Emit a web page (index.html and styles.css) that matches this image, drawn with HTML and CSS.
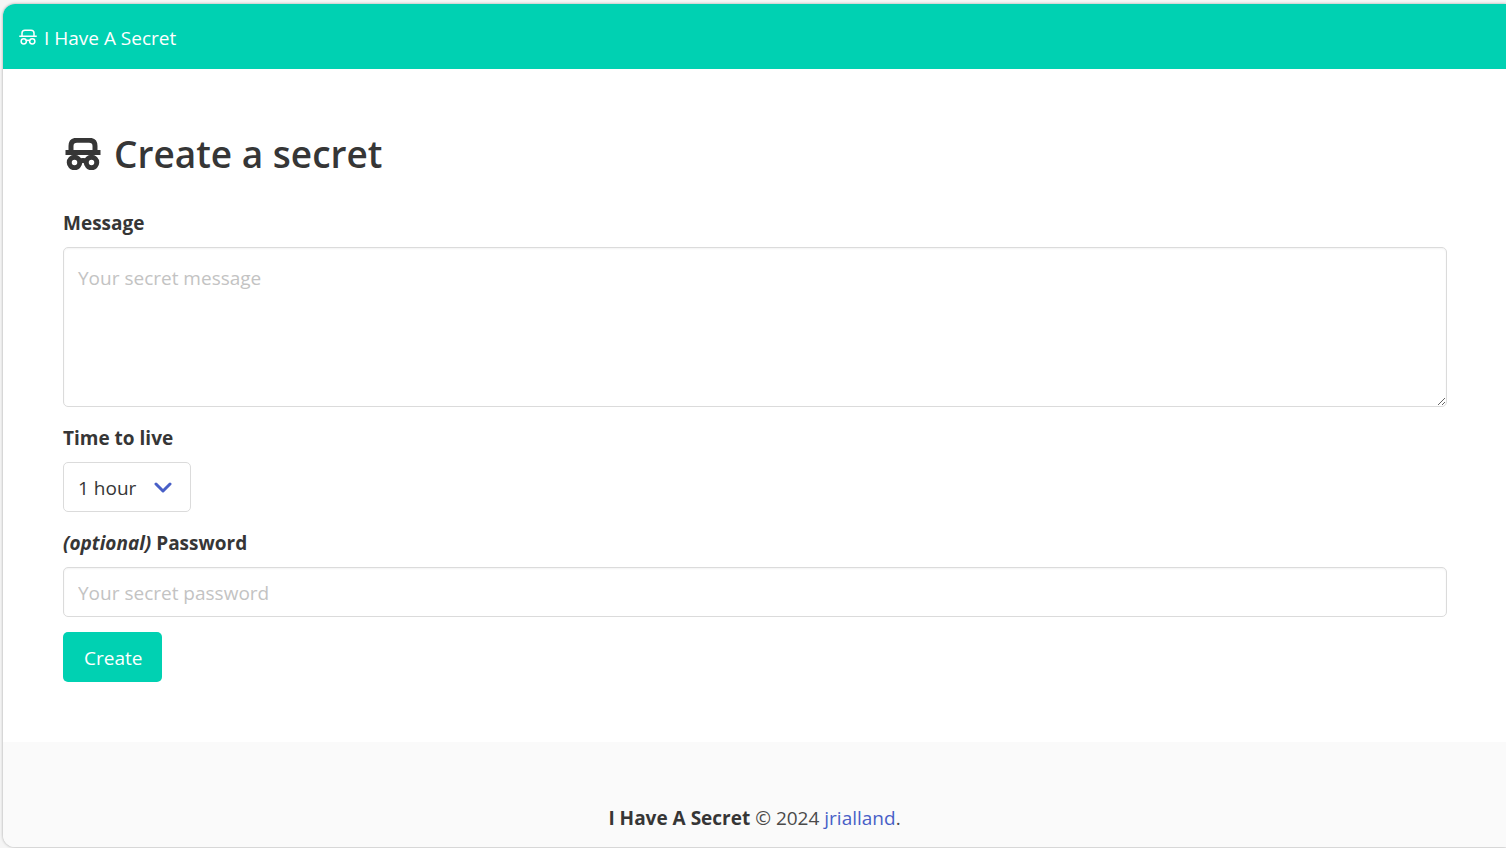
FILE: index.html
```html
<!DOCTYPE html>
<html lang="en">
<head>
  <meta charset="utf-8">
  <meta name="viewport" content="width=device-width, initial-scale=1">
  <title>I Have A Secret</title>
  <link rel="stylesheet" href="styles.css">
</head>
<body>
  <svg class="sprite" aria-hidden="true">
    <symbol id="incognito" viewBox="0 0 35 32">
      <path d="M5.500 14V8Q5.500 2.250 11.500 2.250h12Q29.500 2.250 29.500 8V14"/>
      <path d="M0 14.500h35"/>
      <circle cx="9" cy="24.500" r="5.250"/>
      <circle cx="26" cy="24.500" r="5.250"/>
      <path d="M13 23.500q4.500-2 9 0"/>
    </symbol>
  </svg>
  <div class="page">
    <nav class="navbar">
      <a class="brand" href="#"><svg class="icon brand-icon" aria-hidden="true"><use href="#incognito"/></svg>I Have A Secret</a>
    </nav>
    <main class="section">
      <h1 class="title"><svg class="icon title-icon" aria-hidden="true"><use href="#incognito"/></svg>Create a secret</h1>
      <form class="form">
        <div class="field">
          <label class="label" for="message">Message</label>
          <textarea class="control textarea" id="message" placeholder="Your secret message"></textarea>
        </div>
        <div class="field">
          <label class="label" for="ttl">Time to live</label>
          <div class="select">
            <select class="control" id="ttl"><option>1 hour</option></select>
            <svg class="arrow" viewBox="0 0 18 11" aria-hidden="true"><path d="M2 2l7 7 7-7" fill="none" stroke="currentColor" stroke-width="3" stroke-linecap="round" stroke-linejoin="round"/></svg>
          </div>
        </div>
        <div class="field">
          <label class="label" for="password"><em>(optional)</em> Password</label>
          <input class="control input" id="password" type="password" placeholder="Your secret password">
        </div>
        <button class="button" type="button">Create</button>
      </form>
    </main>
    <footer class="footer">
      <p><strong>I Have A Secret</strong> © 2024 <a href="#">jrialland</a>.</p>
    </footer>
  </div>
</body>
</html>
```
FILE: styles.css
```css
* {
  box-sizing: border-box;
}

body {
  margin: 0;
  padding: 4px 0 1px 3px;
  min-height: 100vh;
  display: flex;
  background: #f5f5f5;
  color: #4a4a4a;
  font: 19px/30px "Open Sans", "Noto Sans", sans-serif;
}

.sprite {
  position: absolute;
  width: 0;
  height: 0;
}

.icon {
  fill: none;
  stroke: currentColor;
}

.page {
  flex: 1;
  display: flex;
  flex-direction: column;
  overflow: hidden;
  background: #fff;
  border-radius: 12px 0 0 12px;
  box-shadow: 0 0 3px rgba(0, 0, 0, 0.35);
}

.navbar {
  display: flex;
  height: 65px;
  padding: 0 16px;
  background: #00d1b2;
}

.brand {
  display: flex;
  align-items: center;
  gap: 7px;
  padding-top: 3px;
  color: #fff;
  text-decoration: none;
}

.brand-icon {
  width: 18px;
  height: 16px;
  margin-bottom: 3px;
  stroke-width: 3px;
}

.section {
  flex: 1;
  padding: 60px 59px 60px 60px;
}

.title {
  display: flex;
  align-items: center;
  gap: 13px;
  margin: 0 0 29px;
  padding-left: 2px;
  color: #363636;
  font-size: 37px;
  font-weight: 600;
  line-height: 50px;
}

.title-icon {
  width: 36px;
  height: 32px;
  stroke-width: 5px;
}

.form {
  display: flex;
  flex-direction: column;
  align-items: flex-start;
}

.field {
  display: flex;
  flex-direction: column;
  align-items: flex-start;
  gap: 9px;
  width: 100%;
  margin-bottom: 16px;
}

.field:last-of-type {
  margin-bottom: 15px;
}

.label {
  color: #363636;
  font-weight: 700;
}

.control {
  display: block;
  height: 50px;
  padding: 10px 14px 8px;
  border: 1px solid #dbdbdb;
  border-radius: 5px;
  background: #fff;
  color: #363636;
  font: inherit;
}

.input,
.textarea {
  width: 100%;
  box-shadow: inset 0 1px 2px rgba(10, 10, 10, 0.05);
}

.textarea {
  height: 160px;
  padding: 15px 14px;
  resize: vertical;
}

.control::placeholder {
  color: #c3c3c3;
  opacity: 1;
}

.select {
  position: relative;
}

.select .control {
  width: 128px;
  appearance: none;
}

.arrow {
  position: absolute;
  top: 20px;
  right: 19px;
  width: 18px;
  height: 11px;
  color: #485fc7;
  pointer-events: none;
}

.button {
  height: 50px;
  padding: 2px 20px 0 21px;
  border: 0;
  border-radius: 5px;
  background: #00d1b2;
  color: #fff;
  font: inherit;
}

.footer {
  padding: 61px 30px 14px;
  background: #fafafa;
  text-align: center;
}

.footer p {
  margin: 0;
}

.footer strong {
  color: #363636;
}

.footer a {
  color: #485fc7;
  text-decoration: none;
}
```
